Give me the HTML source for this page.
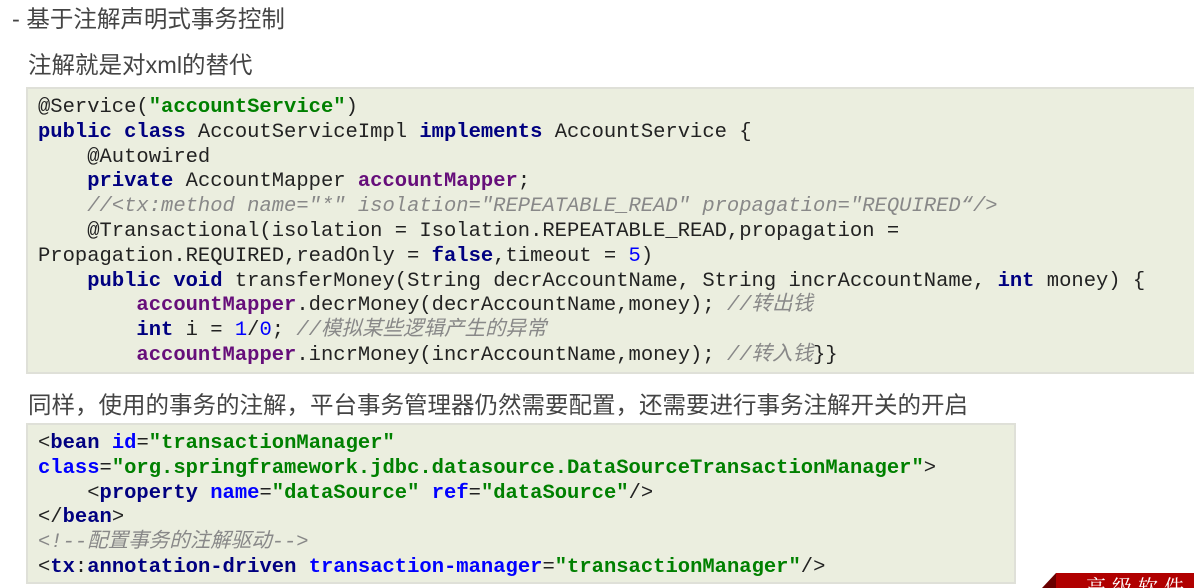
<!DOCTYPE html>
<html><head><meta charset="utf-8"><style>
body{margin:0;width:1194px;height:588px;background:#fff;position:relative;overflow:hidden;font-family:"Liberation Sans","Noto Sans CJK SC",sans-serif;color:#444}
.t{position:absolute;font-size:23.5px;white-space:nowrap;line-height:28px}
.code{position:absolute;background:#ebeedf;border:2px solid #dfe0d8;box-sizing:border-box;overflow:hidden}
pre{margin:0;font-family:"Liberation Mono","Noto Sans CJK SC",monospace;font-size:20.5px;line-height:24.8px;color:#222;position:absolute;left:10px;white-space:pre}
.k{color:#000080;font-weight:bold}.s{color:#008000;font-weight:bold}.p{color:#660e7a;font-weight:bold}.c{color:#888;font-style:italic}.n{color:#0000ff}
</style></head><body>
<div class="t" style="left:12px;top:5px">- 基于注解声明式事务控制</div>
<div class="t" style="left:28px;top:51px">注解就是对xml的替代</div>
<div class="code" style="left:26px;top:87px;width:1180px;height:287px"><pre style="top:7px">@Service(<span class="s">"accountService"</span>)
<span class="k">public class</span> AccoutServiceImpl <span class="k">implements</span> AccountService {
    @Autowired
    <span class="k">private</span> AccountMapper <span class="p">accountMapper</span>;
    <span class="c">//&lt;tx:method name="*" isolation="REPEATABLE_READ" propagation="REQUIRED“/&gt;</span>
    @Transactional(isolation = Isolation.REPEATABLE_READ,propagation =
Propagation.REQUIRED,readOnly = <span class="k">false</span>,timeout = <span class="n">5</span>)
    <span class="k">public void</span> transferMoney(String decrAccountName, String incrAccountName, <span class="k">int</span> money) {
        <span class="p">accountMapper</span>.decrMoney(decrAccountName,money); <span class="c">//转出钱</span>
        <span class="k">int</span> i = <span class="n">1</span>/<span class="n">0</span>; <span class="c">//模拟某些逻辑产生的异常</span>
        <span class="p">accountMapper</span>.incrMoney(incrAccountName,money); <span class="c">//转入钱</span>}}</pre></div>
<div class="t" style="left:28px;top:391px">同样，使用的事务的注解，平台事务管理器仍然需要配置，还需要进行事务注解开关的开启</div>
<div class="code" style="left:26px;top:423px;width:990px;height:161px"><pre style="top:7px">&lt;<span class="k">bean</span> <span class="k" style="color:#0000ff">id</span>=<span class="s">"transactionManager"</span>
<span class="k" style="color:#0000ff">class</span>=<span class="s">"org.springframework.jdbc.datasource.DataSourceTransactionManager"</span>&gt;
    &lt;<span class="k">property</span> <span class="k" style="color:#0000ff">name</span>=<span class="s">"dataSource"</span> <span class="k" style="color:#0000ff">ref</span>=<span class="s">"dataSource"</span>/&gt;
&lt;/<span class="k">bean</span>&gt;
<span class="c">&lt;!--配置事务的注解驱动--&gt;</span>
&lt;<span class="k">tx</span>:<span class="k">annotation-driven</span> <span class="k" style="color:#0000ff">transaction-manager</span>=<span class="s">"transactionManager"</span>/&gt;</pre></div>
<div style="position:absolute;left:1042px;top:573px;width:0;height:0;border-bottom:15px solid #6a0000;border-left:14px solid transparent"></div>
<div style="position:absolute;left:1056px;top:573px;width:140px;height:15px;background:#b00000;overflow:hidden"><span style="position:absolute;left:30px;top:-2px;color:#fff;font-size:20px;font-family:'Noto Serif CJK SC',serif;letter-spacing:6px">高级软件人</span></div>
</body></html>
